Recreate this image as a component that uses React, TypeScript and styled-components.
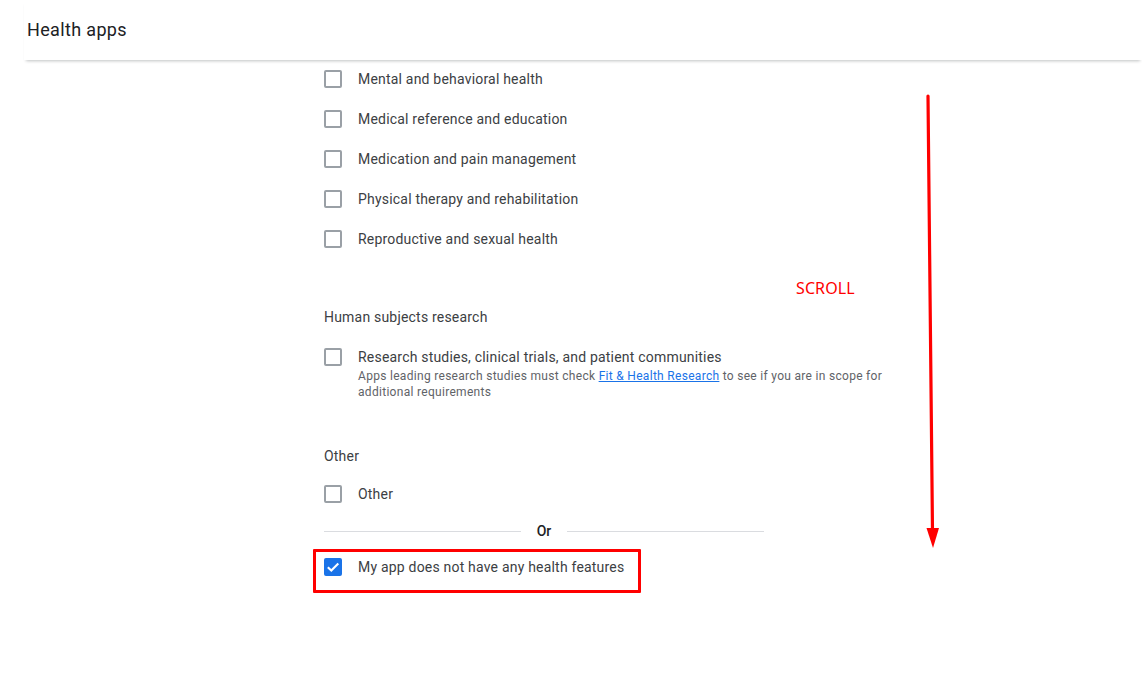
import React from "react";
import styled, { createGlobalStyle } from "styled-components";

const Global = createGlobalStyle`
  html, body { margin: 0; padding: 0; background: #fff; }
  body { font-family: Roboto, "Noto Sans", Arial, sans-serif; color: #3c4043; }
  * { box-sizing: border-box; }
`;

const Page = styled.div`
  position: relative;
  width: 1142px;
  height: 677px;
  overflow: hidden;
  background: #fff;
`;

const Header = styled.header`
  height: 60px;
  margin-left: 24px;
  padding-left: 3px;
  display: flex;
  align-items: center;
  background: #fff;
  box-shadow: 0 3px 3px -2px rgba(60, 64, 67, 0.32);
  position: relative;
  z-index: 1;
`;

const Title = styled.h1`
  margin: 0;
  font-size: 18px;
  font-weight: 400;
  letter-spacing: 0.35px;
  color: #202124;
  line-height: 24px;
`;

const Main = styled.main`
  padding-left: 324px;
  margin-top: -1px;
`;

const Column = styled.div`
  width: 566px;
  display: flex;
  flex-direction: column;
`;

const SectionHeading = styled.div<{ $top: number; $bottom: number }>`
  margin-top: ${(p) => p.$top}px;
  margin-bottom: ${(p) => p.$bottom}px;
  font-size: 14px;
  line-height: 20px;
  letter-spacing: 0.2px;
  color: #3c4043;
`;

const Row = styled.label`
  position: relative;
  display: flex;
  align-items: flex-start;
  gap: 16px;
  padding: 10px 0;
  min-height: 40px;
`;

const Box = styled.span<{ $checked?: boolean }>`
  flex: none;
  width: 18px;
  height: 18px;
  margin-top: 1px;
  border-radius: 2px;
  border: 2px solid ${(p) => (p.$checked ? "#1a73e8" : "#9aa0a6")};
  background: ${(p) => (p.$checked ? "#1a73e8" : "#fff")};
  display: flex;
  align-items: center;
  justify-content: center;
`;

const RowText = styled.div`
  display: flex;
  flex-direction: column;
`;

const Label = styled.span`
  font-size: 14px;
  line-height: 20px;
  letter-spacing: 0.2px;
  color: #3c4043;
`;

const Desc = styled.span`
  margin-top: 1px;
  font-size: 12px;
  line-height: 16px;
  color: #5f6368;
  letter-spacing: 0.3px;
`;

const Link = styled.a`
  color: #1a73e8;
  text-decoration: underline;
`;

const Divider = styled.div`
  width: 440px;
  margin-top: 7px;
  display: flex;
  align-items: center;
  height: 20px;
`;

const Line = styled.span`
  flex: 1;
  height: 1px;
  background: #dadce0;
`;

const Or = styled.span`
  padding: 0 16px;
  font-size: 14px;
  font-weight: 500;
  color: #202124;
  line-height: 20px;
`;

const Highlighted = styled(Row)`
  margin-top: 6px;
  &::after {
    content: "";
    position: absolute;
    left: -11px;
    top: 2px;
    width: 322px;
    height: 38px;
    border: 3px solid #ff0000;
    border-radius: 1px;
    pointer-events: none;
  }
`;

const ScrollNote = styled.span`
  position: absolute;
  left: 796px;
  top: 277px;
  font-family: "Noto Sans", "Open Sans", sans-serif;
  font-size: 16px;
  line-height: 22px;
  color: #ff0000;
  letter-spacing: 0.1px;
`;

const Arrow = styled.svg`
  position: absolute;
  left: 920px;
  top: 90px;
`;

const Check = () => (
  <svg width="14" height="14" viewBox="0 0 14 14">
    <path d="M1.8 7.2 L5.3 10.6 L12.3 3.4" fill="none" stroke="#fff" strokeWidth="2.1" />
  </svg>
);

const Item: React.FC<{ label: string; checked?: boolean; children?: React.ReactNode }> = ({
  label,
  checked,
  children,
}) => (
  <Row>
    <Box $checked={checked}>{checked && <Check />}</Box>
    <RowText>
      <Label>{label}</Label>
      {children}
    </RowText>
  </Row>
);

const health = [
  "Mental and behavioral health",
  "Medical reference and education",
  "Medication and pain management",
  "Physical therapy and rehabilitation",
  "Reproductive and sexual health",
];

export default function App() {
  return (
    <>
      <Global />
      <Page>
        <Header>
          <Title>Health apps</Title>
        </Header>
        <Main>
          <Column>
            {health.map((h) => (
              <Item key={h} label={h} />
            ))}
            <SectionHeading $top={48} $bottom={10}>
              Human subjects research
            </SectionHeading>
            <Item label="Research studies, clinical trials, and patient communities">
              <Desc>
                Apps leading research studies must check <Link href="#">Fit &amp; Health Research</Link> to see if
                you are in scope for additional requirements
              </Desc>
            </Item>
            <SectionHeading $top={36} $bottom={8}>
              Other
            </SectionHeading>
            <Item label="Other" />
            <Divider>
              <Line />
              <Or>Or</Or>
              <Line />
            </Divider>
            <Highlighted>
              <Box $checked>
                <Check />
              </Box>
              <RowText>
                <Label>My app does not have any health features</Label>
              </RowText>
            </Highlighted>
          </Column>
        </Main>
        <ScrollNote>SCROLL</ScrollNote>
        <Arrow width="24" height="462" viewBox="0 0 24 462">
          <line x1="8" y1="6" x2="12.5" y2="442" stroke="#ff0000" strokeWidth="3.2" strokeLinecap="round" />
          <polygon points="6.5,438 19,438 13,458" fill="#ff0000" />
        </Arrow>
      </Page>
    </>
  );
}
